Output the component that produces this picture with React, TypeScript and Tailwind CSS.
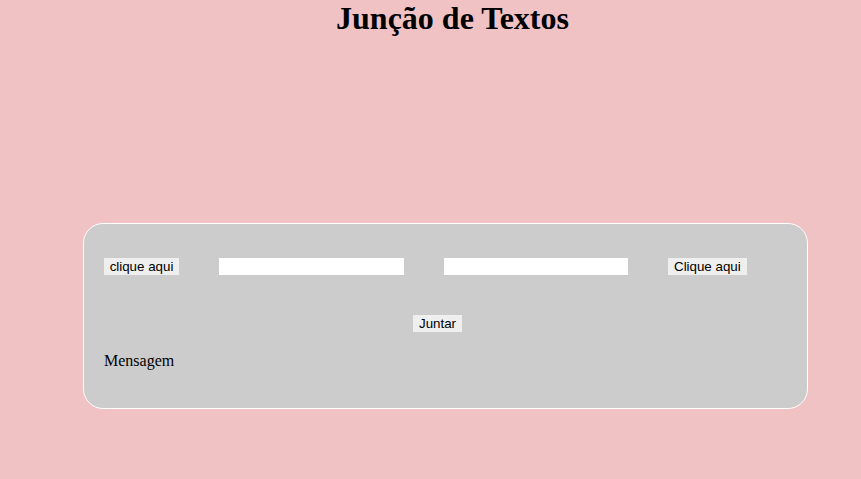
import React from 'react';

export default function App() {
  return (
    <div className="min-h-screen bg-[#f1c2c4] pb-10">
      <h1 className="m-0 pl-[44px] text-center text-[32px] font-bold leading-[37px] text-black font-['Liberation_Serif',serif]">
        Junção de Textos
      </h1>

      <div className="ml-[83px] mt-[186px] w-[725px] rounded-[20px] border border-white bg-[#cccccc] pl-5 pr-5 pt-[34px] pb-[38px]">
        {/* linha dos campos */}
        <div className="flex items-center gap-10 h-[17px]">
          <button className="h-[17px] w-[75px] bg-[#efefef] text-[13.33px] leading-[17px] text-black font-['Liberation_Sans',sans-serif]">
            clique aqui
          </button>
          <input className="h-[17px] w-[185px] bg-white outline-none" />
          <input className="h-[17px] w-[184px] bg-white outline-none" />
          <button className="h-[17px] bg-[#efefef] px-[6px] text-[13.33px] leading-[17px] text-black font-['Liberation_Sans',sans-serif]">
            Clique aqui
          </button>
        </div>

        <div className="mt-10 flex pl-[309px]">
          <button className="h-[17px] bg-[#efefef] px-[6px] text-[13.33px] leading-[17px] text-black font-['Liberation_Sans',sans-serif]">
            Juntar
          </button>
        </div>

        <p className="mt-5 text-[16px] leading-[18px] text-black font-['Liberation_Serif',serif]">Mensagem</p>
      </div>
    </div>
  );
}
